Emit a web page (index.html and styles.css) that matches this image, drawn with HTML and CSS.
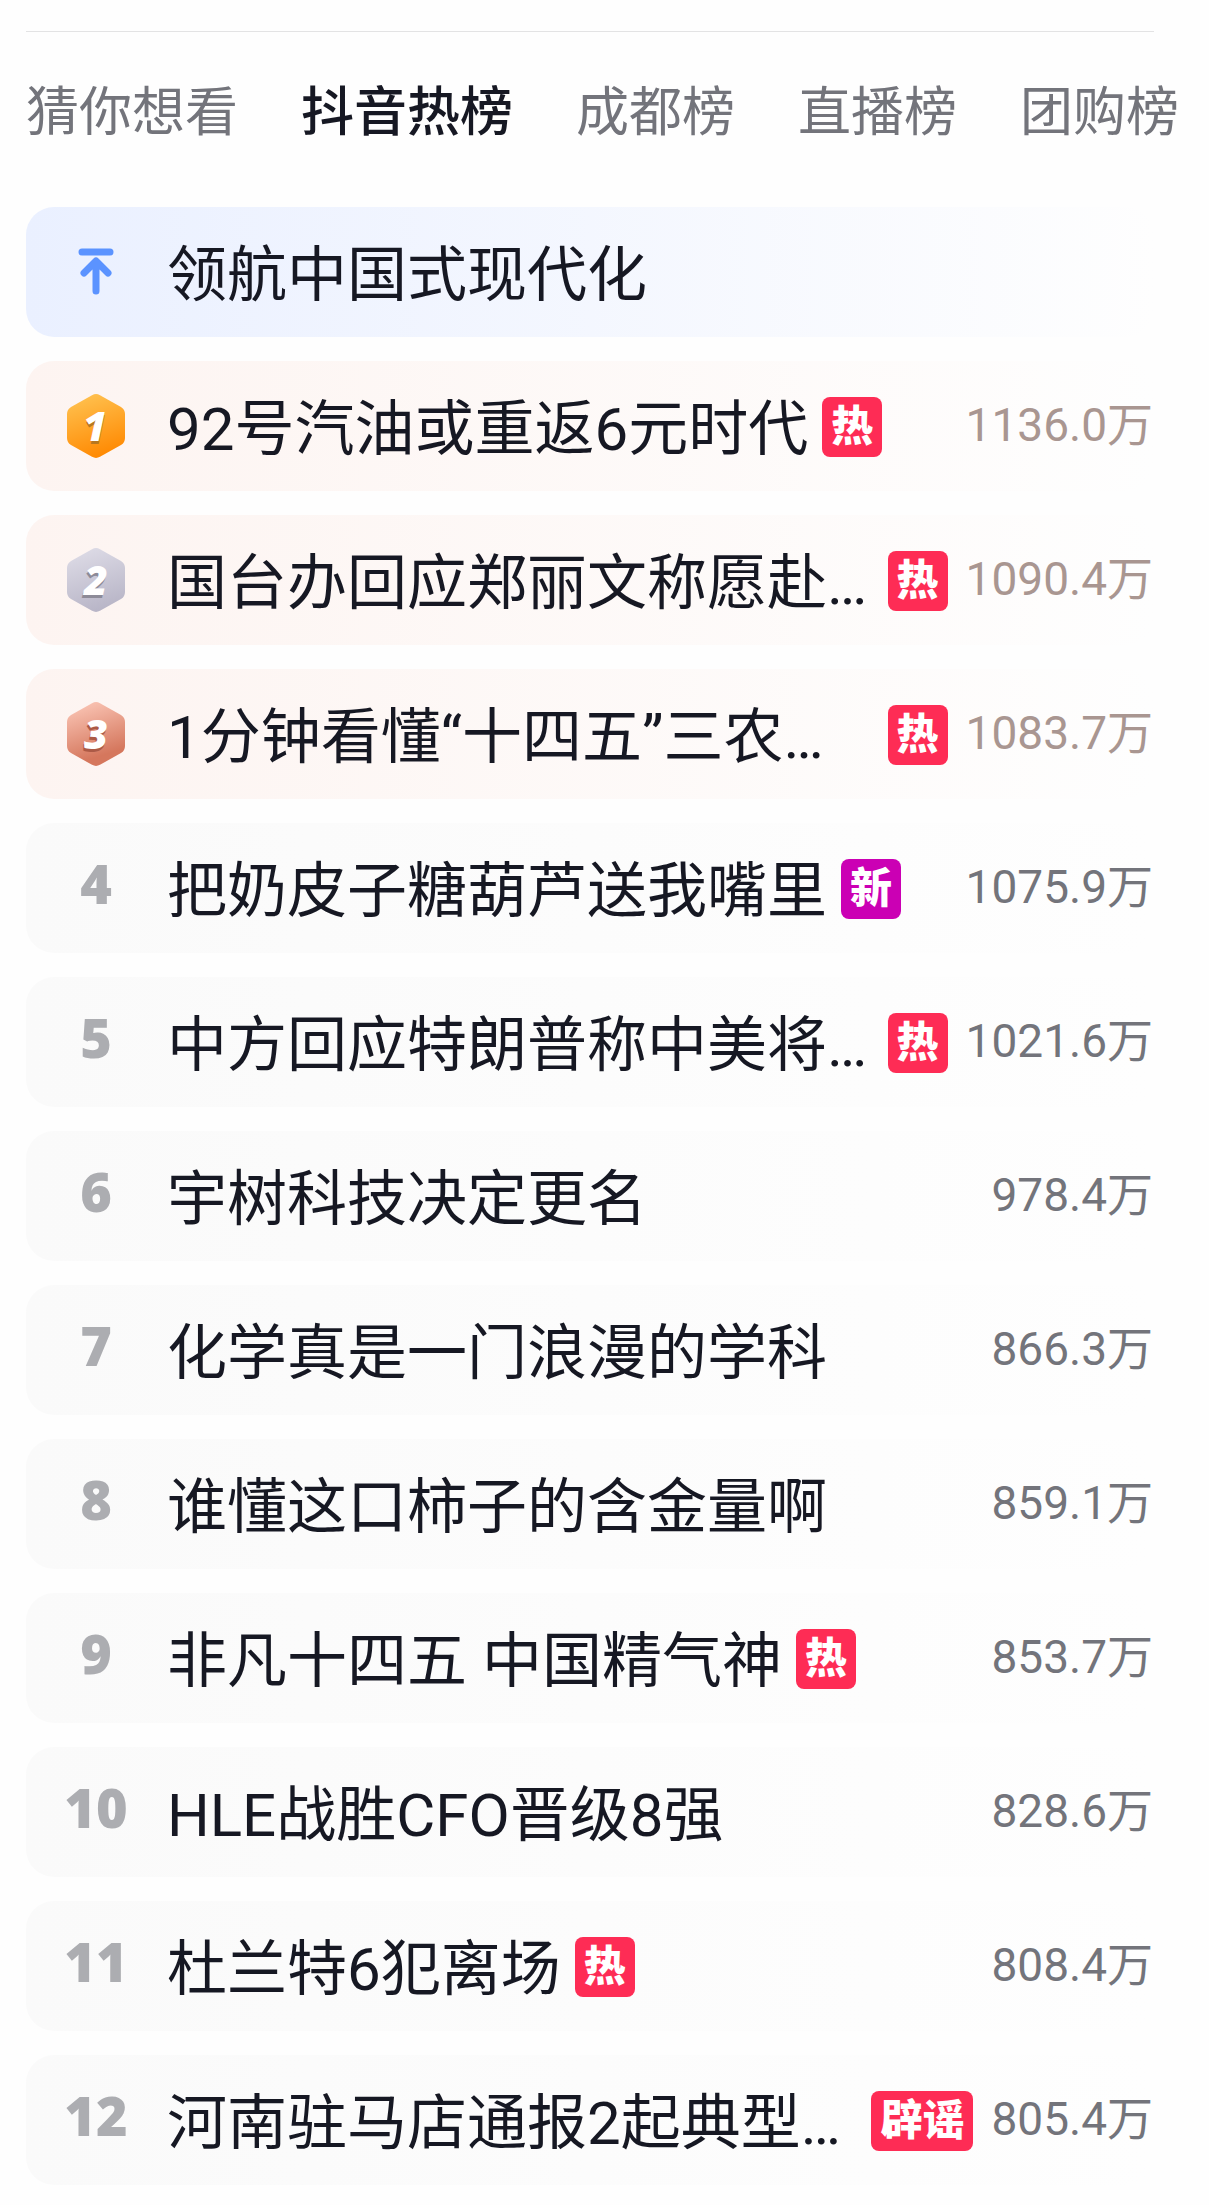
FILE: index.html
```html
<!DOCTYPE html>
<html lang="zh-CN">
<head>
<meta charset="utf-8">
<meta name="viewport" content="width=device-width, initial-scale=1">
<title>抖音热榜</title>
<link rel="stylesheet" href="styles.css">
</head>
<body>
<main class="page">
  <nav class="tabs" aria-label="榜单">
    <a class="tab" href="#guess">猜你想看</a>
    <a class="tab tab-active" href="#hot" aria-current="page">抖音热榜</a>
    <a class="tab" href="#chengdu">成都榜</a>
    <a class="tab" href="#live">直播榜</a>
    <a class="tab" href="#group">团购榜</a>
  </nav>
  <ol class="list">
    <li class="row row-pinned">
      <span class="rank"><svg class="pin" viewBox="0 0 36 48" aria-hidden="true"><path d="M4 4H32M18 43V15M6 25L18 13L30 25" fill="none" stroke="#5b93ff" stroke-width="7" stroke-linecap="round" stroke-linejoin="round"/></svg></span>
      <a class="title" href="#t0">领航中国式现代化</a>
    </li>
    <li class="row row-top">
      <span class="rank"><svg class="medal" viewBox="0 0 58 64" role="img" aria-label="1"><defs><linearGradient id="gold" x1="0.3" y1="0" x2="0.6" y2="1"><stop offset="0" stop-color="#ffc14f"/><stop offset="1" stop-color="#ff8800"/></linearGradient></defs><path fill="url(#gold)" d="M25 1.2Q29 -1 33 1.2L54 13Q58 15.500 58 20V44Q58 48.500 54 51L33 62.800Q29 65 25 62.800L4 51Q0 48.500 0 44V20Q0 15.500 4 13Z"/><text class="medal-shade shade-gold" x="28" y="50" text-anchor="middle">1</text><text class="medal-num" x="28" y="47" text-anchor="middle">1</text></svg></span>
      <a class="title" href="#t1">92号汽油或重返6元时代</a><span class="badge">热</span>
      <span class="heat">1136.0万</span>
    </li>
    <li class="row row-top">
      <span class="rank"><svg class="medal" viewBox="0 0 58 64" role="img" aria-label="2"><defs><linearGradient id="silver" x1="0.3" y1="0" x2="0.6" y2="1"><stop offset="0" stop-color="#dddbe6"/><stop offset="1" stop-color="#b7b4c6"/></linearGradient></defs><path fill="url(#silver)" d="M25 1.2Q29 -1 33 1.2L54 13Q58 15.500 58 20V44Q58 48.500 54 51L33 62.800Q29 65 25 62.800L4 51Q0 48.500 0 44V20Q0 15.500 4 13Z"/><text class="medal-shade shade-silver" x="28" y="50" text-anchor="middle">2</text><text class="medal-num" x="29" y="47" text-anchor="middle">2</text></svg></span>
      <a class="title" href="#t2">国台办回应郑丽文称愿赴…</a><span class="badge badge-end">热</span>
      <span class="heat">1090.4万</span>
    </li>
    <li class="row row-top">
      <span class="rank"><svg class="medal" viewBox="0 0 58 64" role="img" aria-label="3"><defs><linearGradient id="bronze" x1="0.3" y1="0" x2="0.6" y2="1"><stop offset="0" stop-color="#fac4b4"/><stop offset="0.85" stop-color="#d5775d"/></linearGradient></defs><path fill="url(#bronze)" d="M25 1.2Q29 -1 33 1.2L54 13Q58 15.500 58 20V44Q58 48.500 54 51L33 62.800Q29 65 25 62.800L4 51Q0 48.500 0 44V20Q0 15.500 4 13Z"/><text class="medal-shade shade-bronze" x="28" y="50" text-anchor="middle">3</text><text class="medal-num" x="29" y="47" text-anchor="middle">3</text></svg></span>
      <a class="title" href="#t3">1分钟看懂“十四五”三农…</a><span class="badge badge-end">热</span>
      <span class="heat">1083.7万</span>
    </li>
    <li class="row">
      <span class="rank">4</span>
      <a class="title" href="#t4">把奶皮子糖葫芦送我嘴里</a><span class="badge badge-new">新</span>
      <span class="heat">1075.9万</span>
    </li>
    <li class="row">
      <span class="rank">5</span>
      <a class="title" href="#t5">中方回应特朗普称中美将…</a><span class="badge badge-end">热</span>
      <span class="heat">1021.6万</span>
    </li>
    <li class="row">
      <span class="rank">6</span>
      <a class="title" href="#t6">宇树科技决定更名</a>
      <span class="heat">978.4万</span>
    </li>
    <li class="row">
      <span class="rank">7</span>
      <a class="title" href="#t7">化学真是一门浪漫的学科</a>
      <span class="heat">866.3万</span>
    </li>
    <li class="row">
      <span class="rank">8</span>
      <a class="title" href="#t8">谁懂这口柿子的含金量啊</a>
      <span class="heat">859.1万</span>
    </li>
    <li class="row">
      <span class="rank">9</span>
      <a class="title" href="#t9">非凡十四五 中国精气神</a><span class="badge">热</span>
      <span class="heat">853.7万</span>
    </li>
    <li class="row">
      <span class="rank">10</span>
      <a class="title" href="#t10">HLE战胜CFO晋级8强</a>
      <span class="heat">828.6万</span>
    </li>
    <li class="row">
      <span class="rank">11</span>
      <a class="title" href="#t11">杜兰特6犯离场</a><span class="badge">热</span>
      <span class="heat">808.4万</span>
    </li>
    <li class="row">
      <span class="rank">12</span>
      <a class="title" href="#t12">河南驻马店通报2起典型…</a><span class="badge badge-end">辟谣</span>
      <span class="heat">805.4万</span>
    </li>
  </ol>
</main>
</body>
</html>
```
FILE: styles.css
```css
* {
  box-sizing: border-box;
}

body {
  margin: 0;
  background: #fefefe;
  color: #161823;
  font-family: Roboto, "Noto Sans CJK SC", sans-serif;
  overflow-x: hidden;
}

a {
  color: inherit;
  text-decoration: none;
}

.page {
  padding: 31px 55px 20px 26px;
}

.tabs {
  display: flex;
  gap: 63px;
  height: 176px;
  padding-top: 41px;
  border-top: 1px solid #e3e3e4;
  font-size: 53px;
  line-height: 80px;
  white-space: nowrap;
  color: #73747b;
}

.tab {
  flex: none;
}

.tab-active {
  color: #161823;
  font-weight: 500;
}

.list {
  display: flex;
  flex-direction: column;
  gap: 24px;
  margin: 0;
  padding: 0;
  list-style: none;
}

.row {
  display: flex;
  align-items: center;
  height: 130px;
  padding-right: 1px;
  padding-left: 26px;
  border-radius: 28px;
  background: linear-gradient(90deg, #fafafa, #fefefe);
  white-space: nowrap;
}

.row-pinned {
  background: linear-gradient(90deg, #eaf0ff, #fefefe);
}

.row-top {
  background: linear-gradient(90deg, #fdf4f1, #fefefe);
}

.rank {
  display: flex;
  flex: none;
  justify-content: center;
  width: 88px;
  margin-right: 27px;
  padding-bottom: 10px;
  font-family: "Open Sans", Roboto, sans-serif;
  font-size: 54px;
  font-weight: 800;
  line-height: 64px;
  color: #acadb1;
}

.row-pinned .rank,
.row-top .rank {
  padding-bottom: 0;
}

.pin {
  width: 36px;
  height: 48px;
}

.medal {
  width: 58px;
  height: 64px;
}

.medal-num,
.medal-shade {
  font-size: 41px;
  font-style: italic;
}

.medal-num {
  fill: #fff;
}

.shade-gold {
  fill: #b8771f;
}

.shade-silver {
  fill: #8d8b98;
}

.shade-bronze {
  fill: #ac5a46;
}

.title {
  padding-top: 8px;
  font-size: 60px;
  line-height: 80px;
}

.badge {
  flex: none;
  height: 60px;
  margin-top: 2px;
  margin-left: 14px;
  padding: 0 9px;
  border-radius: 8px;
  background: #fe2c55;
  color: #fff;
  font-size: 42px;
  font-weight: 900;
  line-height: 60px;
}

.badge-end {
  margin-left: auto;
}

.badge-new {
  background: #cb00b4;
}

.heat {
  margin-left: auto;
  padding-bottom: 2px;
  font-size: 46px;
  line-height: 64px;
  color: #73747b;
}

.badge-end + .heat {
  margin-left: 18px;
}

.row-top .heat {
  color: #a99691;
}
```
